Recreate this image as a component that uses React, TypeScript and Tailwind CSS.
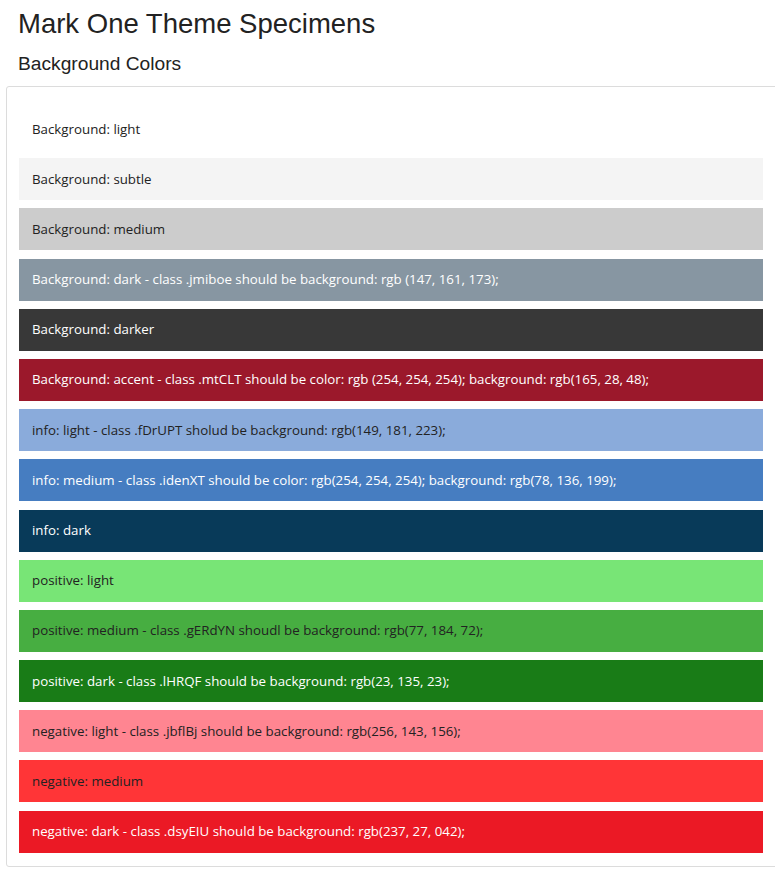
import React from 'react';

const swatches = [
  { label: 'Background: light', cls: 'bg-white text-[#222]' },
  { label: 'Background: subtle', cls: 'bg-[#f4f4f4] text-[#222]' },
  { label: 'Background: medium', cls: 'bg-[#cccccc] text-[#222]' },
  { label: 'Background: dark - class .jmiboe should be background: rgb (147, 161, 173);', cls: 'bg-[#8796a2] text-white' },
  { label: 'Background: darker', cls: 'bg-[#383838] text-white' },
  { label: 'Background: accent - class .mtCLT should be color: rgb (254, 254, 254); background: rgb(165, 28, 48);', cls: 'bg-[#9b182b] text-white' },
  { label: 'info: light - class .fDrUPT sholud be background: rgb(149, 181, 223);', cls: 'bg-[#8aabdb] text-[#222]' },
  { label: 'info: medium - class .idenXT should be color: rgb(254, 254, 254); background: rgb(78, 136, 199);', cls: 'bg-[#467dc1] text-white' },
  { label: 'info: dark', cls: 'bg-[#083a59] text-white' },
  { label: 'positive: light', cls: 'bg-[#78e576] text-[#222]' },
  { label: 'positive: medium - class .gERdYN shoudl be background: rgb(77, 184, 72);', cls: 'bg-[#47ae41] text-[#222]' },
  { label: 'positive: dark - class .lHRQF should be background: rgb(23, 135, 23);', cls: 'bg-[#197c17] text-white' },
  { label: 'negative: light - class .jbflBj should be background: rgb(256, 143, 156);', cls: 'bg-[#ff8591] text-[#222]' },
  { label: 'negative: medium', cls: 'bg-[#ff3537] text-[#222]' },
  { label: 'negative: dark - class .dsyEIU should be background: rgb(237, 27, 042);', cls: 'bg-[#eb1925] text-white' },
];

export default function App() {
  return (
    <div className="w-[775px] h-[869px] overflow-hidden bg-white">
      <h1 className="pl-[18px] pt-[7px] text-[27.5px] leading-[34px] text-[#222] font-['Liberation_Sans',Arial,sans-serif]">
        Mark One Theme Specimens
      </h1>
      <h2 className="pl-[18px] mt-[11px] text-[19.2px] leading-[24px] text-[#222] font-['Liberation_Sans',Arial,sans-serif]">
        Background Colors
      </h2>
      {/* Specimen card */}
      <div className="ml-[6px] mt-[10px] w-[776px] border border-[#dcdcdc] rounded-[3px] px-[12px] pt-[21px] pb-[13px] flex flex-col gap-[8.2px] font-['Open_Sans','Noto_Sans',sans-serif]">
        {swatches.map(s => (
          <div
            key={s.label}
            className={`h-[42px] w-[744px] flex items-center px-[13px] pt-[1px] text-[13.3px] ${s.cls}`}
          >
            {s.label}
          </div>
        ))}
      </div>
    </div>
  );
}
